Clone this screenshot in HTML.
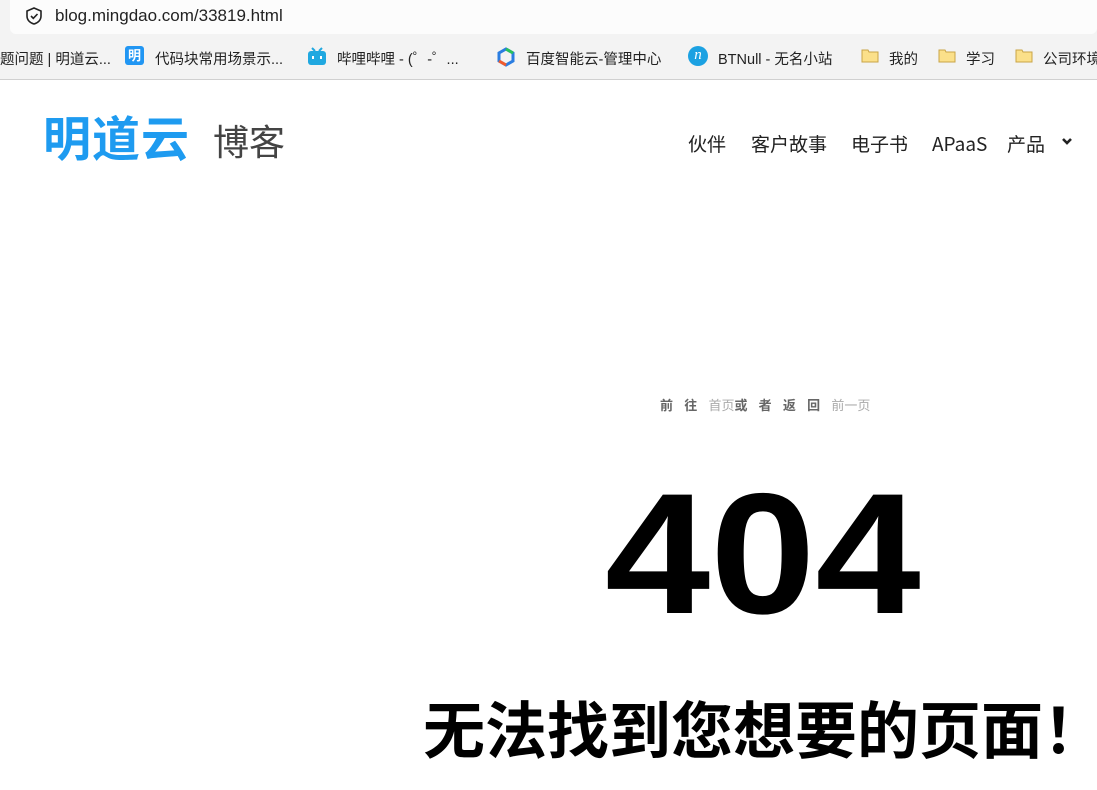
<!DOCTYPE html>
<html><head><meta charset="utf-8"><style>
*{margin:0;padding:0;box-sizing:border-box}
body{width:1097px;height:790px;overflow:hidden;background:#fff;font-family:"Liberation Sans","Noto Sans CJK SC",sans-serif;position:relative}
.top{position:absolute;left:0;top:0;width:1097px;height:35px;background:#f3f3f3}
.url{position:absolute;left:10px;top:0;width:1087px;height:34px;background:#fcfcfc;border-radius:0 0 6px 6px}
.bm{position:absolute;left:0;top:35px;width:1097px;height:45px;background:#f3f3f3;border-bottom:1px solid #d0d0d0;font-size:14.5px;color:#222}
.bm span{position:absolute;top:13px;white-space:nowrap}
.abs{position:absolute;white-space:nowrap}
.nav{position:absolute;top:130px;font-size:19px;color:#222;line-height:28px;height:28px;font-family:"Noto Sans CJK SC","Liberation Sans",sans-serif}
</style></head><body>
<div class="top"></div>
<div class="url">
<svg class="abs" style="left:14px;top:6px" width="20" height="20" viewBox="0 0 20 20"><path d="M10 2 L17 5 V10 C17 14 14 17 10 18 C6 17 3 14 3 10 V5 Z" fill="none" stroke="#222" stroke-width="1.6"/><path d="M7 10 L9.3 12.3 L13.5 8" fill="none" stroke="#222" stroke-width="1.6"/></svg>
<div class="abs" style="left:45px;top:6px;font-size:17px;color:#222">blog.mingdao.com/33819.html</div>
</div>
<div class="bm">
<span style="left:0">题问题 | 明道云...</span>
<span style="left:125px;top:11px;width:19px;height:19px;background:#2196f3;border-radius:3px;color:#fff;font-size:13px;text-align:center;line-height:19px;font-weight:bold">明</span>
<span style="left:155px">代码块常用场景示...</span>
<svg class="abs" style="left:306px;top:12px" width="22" height="20" viewBox="0 0 22 20"><rect x="2" y="4" width="18" height="14" rx="3" fill="#20a8e0"/><path d="M6 1 L9 4 M16 1 L13 4" stroke="#20a8e0" stroke-width="2"/><rect x="6" y="9" width="2" height="3" fill="#fff"/><rect x="14" y="9" width="2" height="3" fill="#fff"/></svg>
<span style="left:337px">哔哩哔哩 - (゜-゜...</span>
<svg class="abs" style="left:496px;top:12px" width="20" height="20" viewBox="0 0 20 20"><path d="M10 2 L17 6 L17 14 L10 18 L3 14 L3 6Z" fill="none" stroke="#2a7de1" stroke-width="3"/><path d="M10 2 L17 6" stroke="#29c15b" stroke-width="3"/><path d="M3 14 L10 18" stroke="#f25a2b" stroke-width="3"/></svg>
<span style="left:526px">百度智能云-管理中心</span>
<span style="left:688px;top:11px;width:20px;height:20px;background:#1ba1e2;border-radius:50%;color:#fff;font-size:15px;text-align:center;line-height:19px;font-style:italic;font-family:'Liberation Serif',serif">n</span>
<span style="left:718px">BTNull - 无名小站</span>
<svg class="abs" style="left:861px;top:13px" width="18" height="15" viewBox="0 0 18 15"><path d="M1 2 H7 L8 4 H17 V14 H1Z" fill="#fbe08a" stroke="#c9a447"/></svg>
<span style="left:889px">我的</span>
<svg class="abs" style="left:938px;top:13px" width="18" height="15" viewBox="0 0 18 15"><path d="M1 2 H7 L8 4 H17 V14 H1Z" fill="#fbe08a" stroke="#c9a447"/></svg>
<span style="left:966px">学习</span>
<svg class="abs" style="left:1015px;top:13px" width="18" height="15" viewBox="0 0 18 15"><path d="M1 2 H7 L8 4 H17 V14 H1Z" fill="#fbe08a" stroke="#c9a447"/></svg>
<span style="left:1043px">公司环境</span>
</div>
<div class="abs" style="left:43px;top:113px;font-size:48px;font-weight:bold;color:#1e9bf0;letter-spacing:1px;line-height:56px">明道云</div>
<div class="abs" style="left:213px;top:121px;font-size:36px;color:#444;line-height:44px">博客</div>
<div class="nav" style="left:688px">伙伴</div>
<div class="nav" style="left:751px">客户故事</div>
<div class="nav" style="left:851px">电子书</div>
<div class="nav" style="left:932px">APaaS</div>
<div class="nav" style="left:1007px">产品</div>
<svg class="abs" style="left:1061px;top:137px" width="12" height="10" viewBox="0 0 12 10"><path d="M2 2 L6 6 L10 2" fill="none" stroke="#222" stroke-width="2.6"/></svg>
<div class="abs" style="left:660px;top:395px;font-size:13px;font-weight:bold;color:#666;letter-spacing:3.8px">前 往 <span style="color:#aaa;font-weight:normal;letter-spacing:0">首页</span>或 者 返 回 <span style="color:#aaa;font-weight:normal;letter-spacing:0">前一页</span></div>
<div class="abs" style="left:605px;top:468px;font-size:172px;font-weight:bold;color:#000;line-height:172px;transform:scaleX(1.1);transform-origin:0 0">404</div>
<div class="abs" style="left:423px;top:684px;font-size:62px;font-weight:bold;color:#000;line-height:84px;font-family:'Noto Sans CJK SC',sans-serif">无法找到您想要的页面！</div>
</body></html>
